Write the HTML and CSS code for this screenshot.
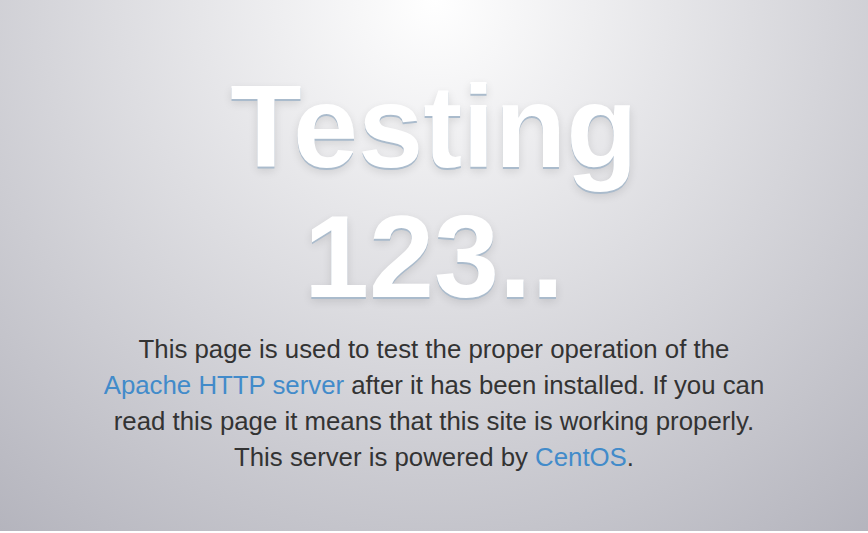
FILE: index.html
```html
<!DOCTYPE html>
<html lang="en">
<head>
<meta charset="utf-8">
<title>Apache HTTP Server Test Page powered by CentOS</title>
<link rel="stylesheet" href="styles.css">
</head>
<body>
<div class="jumbotron">
  <div class="container">
    <h1 class="title">Testing 123..</h1>
    <p class="lead">This page is used to test the proper operation of the <a href="#">Apache HTTP server</a> after it has been installed. If you can read this page it means that this site is working properly. This server is powered by <a href="#">CentOS</a>.</p>
  </div>
</div>
</body>
</html>
```
FILE: styles.css
```css
html {
  background: #fff;
}
body {
  margin: 0;
  font-family: "Liberation Sans", Arial, Helvetica, sans-serif;
}
.jumbotron {
  height: 531px;
  box-sizing: border-box;
  padding-top: 62px;
  text-align: center;
  background: radial-gradient(ellipse 710px 690px at 50% 0%, #ffffff 0%, #b3b3bc 100%);
}
.container {
  max-width: 670px;
  margin: 0 auto;
}
.title {
  margin: 0;
  font-size: 117px;
  line-height: 130px;
  font-weight: bold;
  color: #fff;
  text-shadow: 0 2px 0 #aabbcc, 0 4px 10px rgba(0, 0, 0, 0.12);
}
.lead {
  margin: 9px 0 0;
  font-size: 25.8px;
  line-height: 36px;
  color: #333;
}
.lead a {
  color: #428bca;
  text-decoration: none;
}
```
